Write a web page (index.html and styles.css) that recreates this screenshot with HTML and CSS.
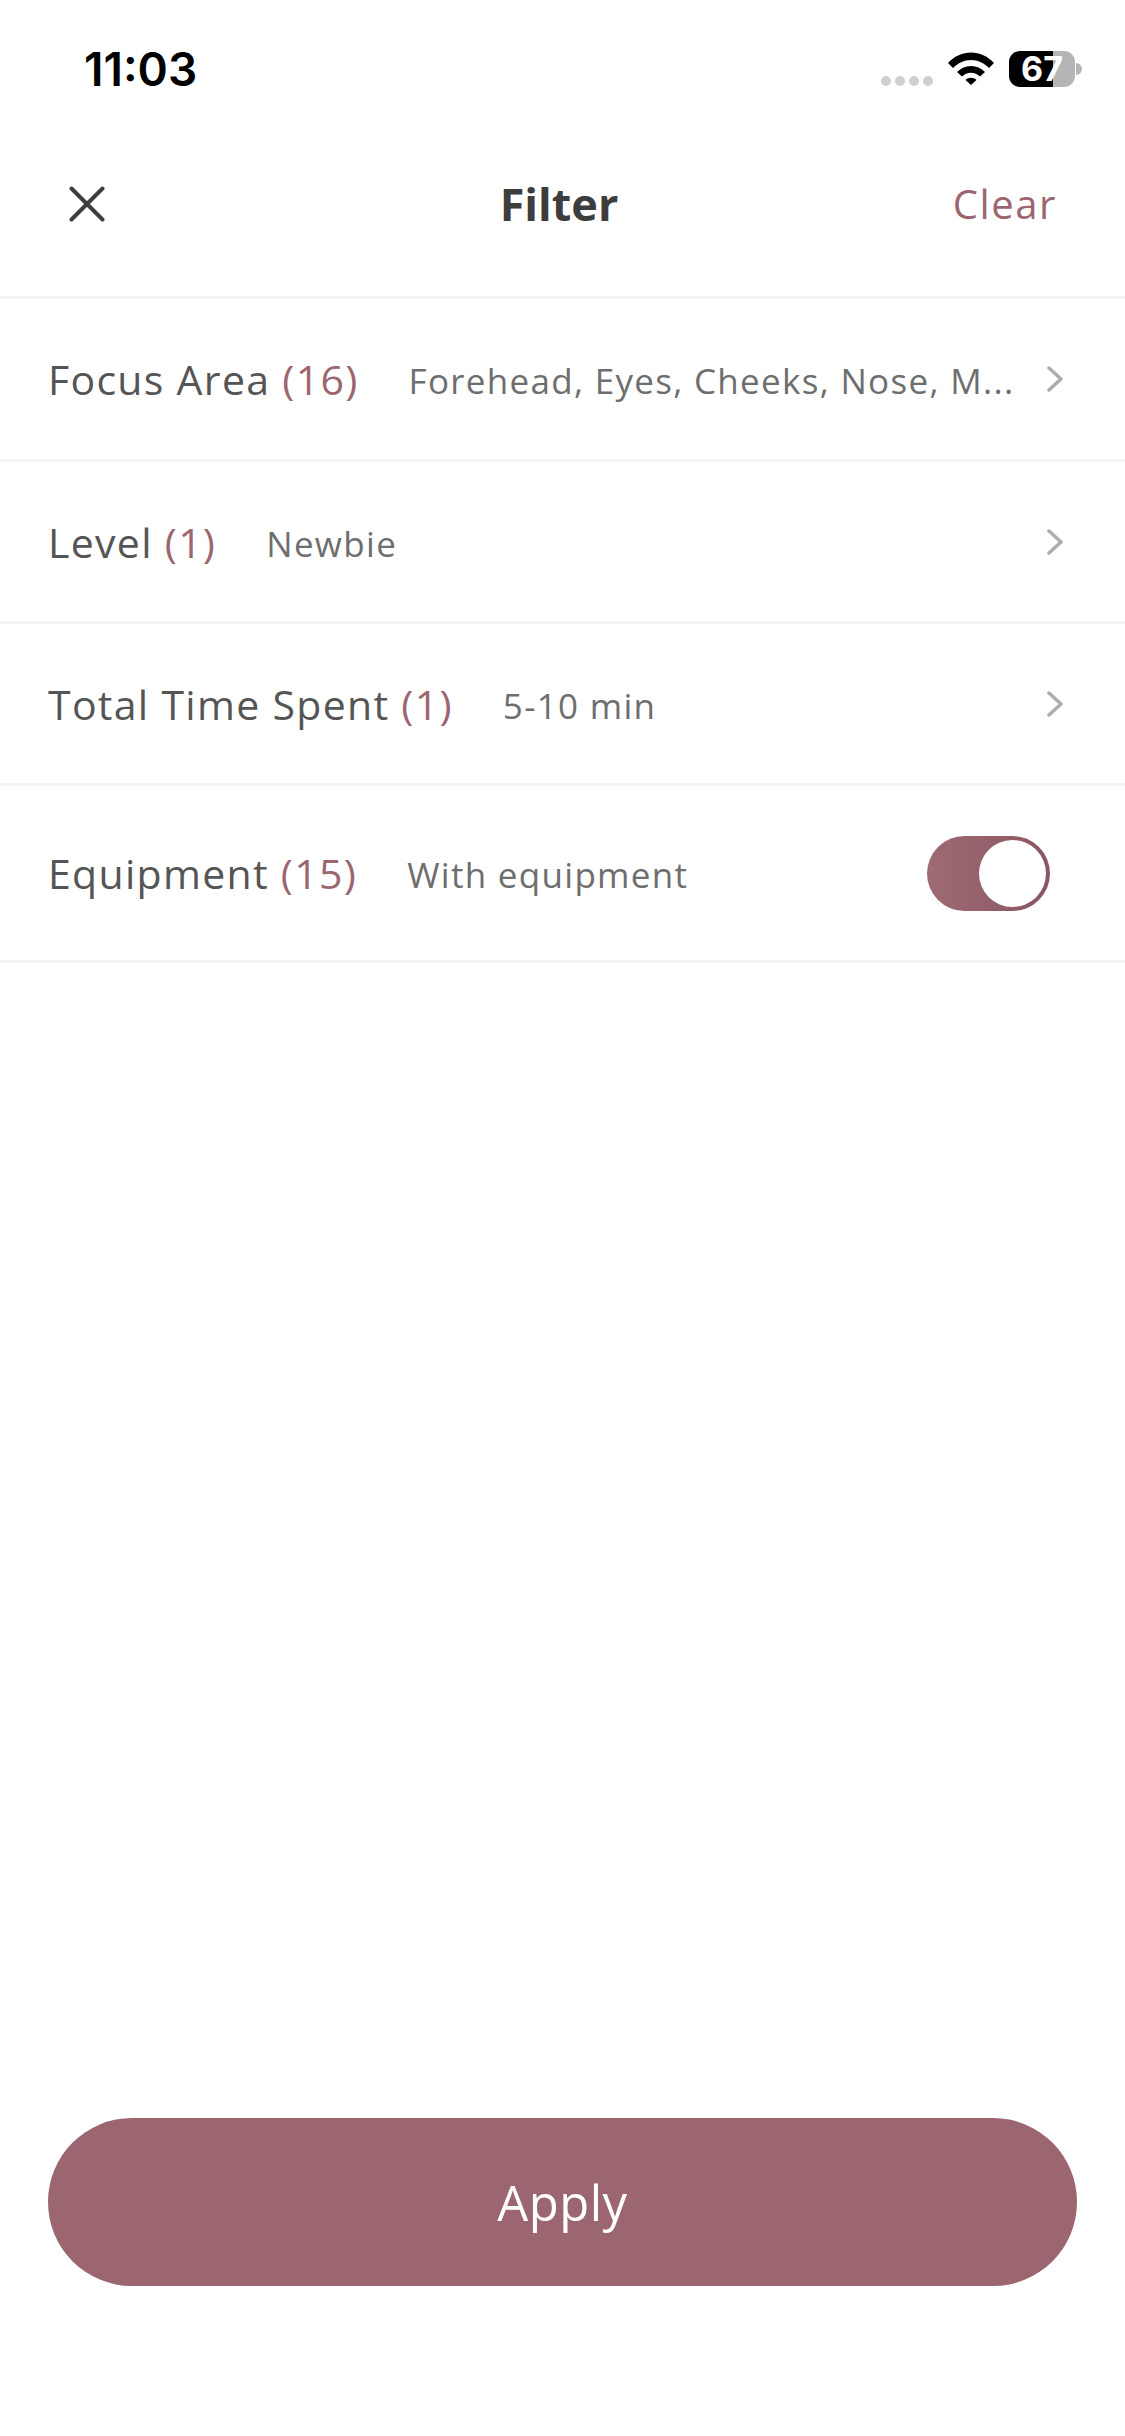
FILE: index.html
```html
<!DOCTYPE html>
<html lang="en">
<head>
    <meta charset="UTF-8">
    <meta name="viewport" content="width=device-width, initial-scale=1.0">
    <title>Filter</title>
    <link rel="stylesheet" href="styles.css">
</head>
<body>
    <div class="page">
        <div class="status-bar">
            <span class="time">11:03</span>
            <div class="status-icons">
                <div class="signal">
                    <span class="dot"></span><span class="dot"></span><span class="dot"></span><span class="dot"></span>
                </div>
                <svg class="wifi" xmlns="http://www.w3.org/2000/svg" viewBox="0 0 46 33">
                    <path d="M0 11C6.500 4 14.500 0.500 23 0.500S39.500 4 46 11L41 16C36 11 30 8 23 8S10 11 5 16z"></path>
                    <path d="M9 20C13 16 17.500 14 23 14S33 16 37 20L32 24.500C29.500 22.200 26.500 20.800 23 20.800S16.500 22.200 14 24.500z"></path>
                    <path d="M17.500 28C19 26.600 21 25.800 23 25.800S27 26.600 28.500 28L23 33z"></path>
                </svg>
                <div class="battery"><span>67</span></div>
                <div class="battery-nub"></div>
            </div>
        </div>

        <div class="header">
            <svg class="close" xmlns="http://www.w3.org/2000/svg" viewBox="0 0 36 36">
                <path d="M2.500 2.500L33.500 33.500M33.500 2.500L2.500 33.500"></path>
            </svg>
            <h1>Filter</h1>
            <span class="clear">Clear</span>
        </div>

        <div class="filter-list">
            <div class="row">
                <span class="label">Focus Area <em>(16)</em></span>
                <span class="value">Forehead, Eyes, Cheeks, Nose, M...</span>
                <svg class="chevron" xmlns="http://www.w3.org/2000/svg" viewBox="0 0 16 26"><path d="M2 2L14 13L2 24"></path></svg>
            </div>
            <div class="row">
                <span class="label">Level <em>(1)</em></span>
                <span class="value">Newbie</span>
                <svg class="chevron" xmlns="http://www.w3.org/2000/svg" viewBox="0 0 16 26"><path d="M2 2L14 13L2 24"></path></svg>
            </div>
            <div class="row">
                <span class="label">Total Time Spent <em>(1)</em></span>
                <span class="value">5-10 min</span>
                <svg class="chevron" xmlns="http://www.w3.org/2000/svg" viewBox="0 0 16 26"><path d="M2 2L14 13L2 24"></path></svg>
            </div>
            <div class="row row-toggle">
                <span class="label">Equipment <em>(15)</em></span>
                <span class="value">With equipment</span>
                <div class="toggle"><span class="knob"></span></div>
            </div>
        </div>

        <div class="footer">
            <button type="button" class="apply">Apply</button>
        </div>
    </div>
</body>
</html>
```

FILE: styles.css
```css
* {
    box-sizing: border-box;
}
body {
    margin: 0;
    background-color: #fff;
    font-family: 'Open Sans', 'Noto Sans', sans-serif;
}
.page {
    height: 2436px;
    display: flex;
    flex-direction: column;
}

/* status bar */
.status-bar {
    height: 115px;
    padding: 48px 43px 0 84px;
    display: flex;
    justify-content: space-between;
    align-items: flex-start;
}
.time {
    font-family: 'Inter', sans-serif;
    font-weight: 600;
    font-size: 46px;
    line-height: 42px;
    color: #000;
}
.status-icons {
    display: flex;
    align-items: flex-start;
    margin-top: 3px;
}
.signal {
    display: flex;
    gap: 4px;
    margin-top: 25px;
    margin-right: 15px;
}
.dot {
    width: 10px;
    height: 10px;
    border-radius: 50%;
    background-color: #cfcfcf;
}
.wifi {
    width: 46px;
    height: 33px;
    margin-top: 1px;
    margin-right: 15px;
    fill: #000;
}
.battery {
    width: 66px;
    height: 36px;
    border-radius: 11px;
    background: linear-gradient(90deg, #000 67%, #b5b5b5 67%);
    color: #fff;
    font-family: 'Inter', sans-serif;
    font-weight: 700;
    font-size: 34px;
    line-height: 36px;
    text-align: center;
}
.battery-nub {
    width: 6px;
    height: 12px;
    margin-top: 12px;
    margin-left: 1px;
    border-radius: 0 6px 6px 0;
    background-color: #b5b5b5;
}

/* header */
.header {
    height: 184px;
    padding: 0 68px 4px 69px;
    display: grid;
    grid-template-columns: 1fr auto 1fr;
    align-items: center;
    border-bottom: 3px solid #f3f3f3;
}
.close {
    width: 36px;
    height: 36px;
    fill: none;
    stroke: #3f3f3f;
    stroke-width: 4;
    stroke-linecap: round;
}
.header h1 {
    margin: 0 8px 0 0;
    font-size: 45px;
    font-weight: 700;
    color: #3d3d3d;
}
.clear {
    justify-self: end;
    font-size: 40px;
    letter-spacing: 1.600px;
    color: #9c6670;
}

/* filter rows */
.row {
    height: 162px;
    padding: 0 62px 0 48px;
    display: flex;
    align-items: center;
    border-bottom: 3px solid #f3f3f3;
}
.row:first-child {
    height: 163px;
}
.row-toggle {
    height: 177px;
    padding-right: 75px;
}
.label {
    font-size: 41px;
    letter-spacing: 1.300px;
    color: #555;
    white-space: nowrap;
    margin-right: 50px;
}
.label em {
    font-style: normal;
    color: #9c6670;
}
.value {
    flex: 1;
    margin-top: 3px;
    font-size: 35px;
    color: #6e6e6e;
    white-space: nowrap;
    overflow: hidden;
    letter-spacing: 1.300px;
}
.chevron {
    width: 16px;
    height: 26px;
    fill: none;
    stroke: #adadad;
    stroke-width: 3.500;
    stroke-linecap: round;
    stroke-linejoin: round;
}
.toggle {
    width: 123px;
    height: 75px;
    padding: 4px;
    border-radius: 38px;
    background: linear-gradient(90deg, #9e6a74, #8a5661);
    display: flex;
    justify-content: flex-end;
}
.knob {
    width: 67px;
    height: 67px;
    border-radius: 50%;
    background-color: #fff;
}

/* apply button */
.footer {
    margin-top: auto;
    padding: 0 48px 150px;
}
.apply {
    width: 100%;
    height: 168px;
    border: none;
    border-radius: 84px;
    background-color: #9c6670;
    color: #fff;
    font-family: inherit;
    font-size: 49px;
    letter-spacing: 0.500px;
}
```
